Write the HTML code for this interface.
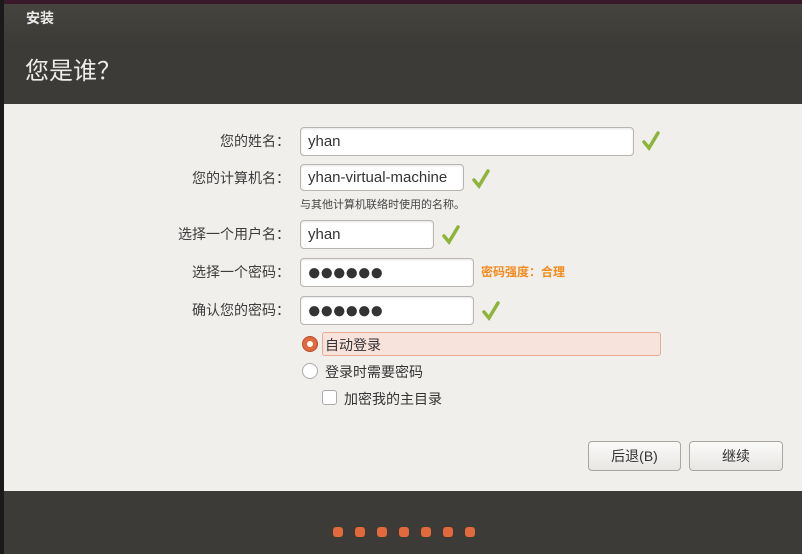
<!DOCTYPE html><html><head><meta charset="utf-8"><style>
*{margin:0;padding:0;box-sizing:border-box}
body{width:802px;height:554px;overflow:hidden;background:#3c3b37;position:relative;font-family:"Liberation Sans","Noto Sans CJK SC",sans-serif;}
.a{position:absolute}
.cjk{font-family:"Noto Sans CJK SC",sans-serif}
.top{left:0;top:0;width:802px;height:4px;background:#3a1a2a}
.edge{left:0;top:0;width:4px;height:554px;background:#1a1a1a}
.hdr{left:4px;top:4px;width:798px;height:100px;background:linear-gradient(#45443f,#3c3b37 40%)}
.main{left:4px;top:104px;width:798px;height:387px;background:#f0efec}
.lbl{font-size:14px;color:#3c3c3c;text-align:right;width:210px;left:80px;font-family:"Noto Sans CJK SC",sans-serif;line-height:16px}
.in{background:#fff;border:1px solid #b8b5b0;border-radius:4px;font-size:15px;color:#333;padding:0 0 0 7px;display:flex;align-items:center;box-shadow:inset 0 1px 2px rgba(0,0,0,.1)}
.dots{letter-spacing:-2px;font-size:24px;color:#333;padding-left:6px}
.btn{border:1px solid #a9a6a1;border-radius:4px;background:linear-gradient(#fafaf9,#e8e6e3);font-size:14px;color:#333;display:flex;align-items:center;justify-content:center}
.dot{width:10px;height:10px;border-radius:3px;background:#e2693c;top:527px}
</style></head><body>
<div class="a top"></div><div class="a hdr"></div><div class="a edge"></div>
<div class="a" style="left:26px;top:8px;font-size:14px;font-weight:bold;color:#eeeceb">安装</div>
<div class="a cjk" style="left:25px;top:52px;font-size:24px;color:#eeeceb;line-height:34px">您是谁？</div>
<div class="a main"></div>
<div class="a lbl" style="top:133px">您的姓名：</div>
<div class="a in" style="left:300px;top:127px;width:334px;height:29px">yhan</div>
<div class="a lbl" style="top:170px">您的计算机名：</div>
<div class="a in" style="left:300px;top:164px;width:164px;height:27px">yhan-virtual-machine</div>
<div class="a" style="left:300px;top:196px;font-size:11px;color:#444">与其他计算机联络时使用的名称。</div>
<div class="a lbl" style="top:226px">选择一个用户名：</div>
<div class="a in" style="left:300px;top:220px;width:134px;height:29px">yhan</div>
<div class="a lbl" style="top:264px">选择一个密码：</div>
<div class="a in dots" style="left:300px;top:258px;width:174px;height:29px">●●●●●●</div>
<div class="a cjk" style="left:481px;top:263px;font-size:12px;font-weight:bold;color:#f28a1c">密码强度：合理</div>
<div class="a lbl" style="top:302px">确认您的密码：</div>
<div class="a in dots" style="left:300px;top:296px;width:174px;height:29px">●●●●●●</div>
<svg class="a" style="left:641px;top:130px" width="20" height="22"><path d="M3 12 L8 18 L17 3" stroke="#8fb43a" stroke-width="3.5" fill="none" stroke-linecap="round"/></svg>
<svg class="a" style="left:471px;top:168px" width="20" height="22"><path d="M3 12 L8 18 L17 3" stroke="#8fb43a" stroke-width="3.5" fill="none" stroke-linecap="round"/></svg>
<svg class="a" style="left:441px;top:224px" width="20" height="22"><path d="M3 12 L8 18 L17 3" stroke="#8fb43a" stroke-width="3.5" fill="none" stroke-linecap="round"/></svg>
<svg class="a" style="left:481px;top:300px" width="20" height="22"><path d="M3 12 L8 18 L17 3" stroke="#8fb43a" stroke-width="3.5" fill="none" stroke-linecap="round"/></svg>
<div class="a" style="left:322px;top:332px;width:339px;height:24px;background:#f8e2dc;border:1px solid #e9a993;border-radius:3px"></div>
<div class="a" style="left:302px;top:336px;width:16px;height:16px;border-radius:50%;background:#e2693c;border:1px solid #b84e2a"><div class="a" style="left:4px;top:4px;width:6px;height:6px;border-radius:50%;background:#fff"></div></div>
<div class="a cjk" style="left:325px;top:335px;font-size:14px;color:#333">自动登录</div>
<div class="a" style="left:302px;top:363px;width:16px;height:16px;border-radius:50%;background:#fff;border:1px solid #aaa"></div>
<div class="a cjk" style="left:325px;top:362px;font-size:14px;color:#333">登录时需要密码</div>
<div class="a" style="left:322px;top:390px;width:15px;height:15px;border-radius:3px;background:#fff;border:1px solid #aaa"></div>
<div class="a cjk" style="left:344px;top:389px;font-size:14px;color:#333">加密我的主目录</div>
<div class="a btn" style="left:588px;top:441px;width:93px;height:30px">后退(B)</div>
<div class="a btn" style="left:689px;top:441px;width:94px;height:30px">继续</div>
<div class="a dot" style="left:333px"></div><div class="a dot" style="left:355px"></div><div class="a dot" style="left:377px"></div><div class="a dot" style="left:399px"></div><div class="a dot" style="left:421px"></div><div class="a dot" style="left:443px"></div><div class="a dot" style="left:465px"></div>
</body></html>
